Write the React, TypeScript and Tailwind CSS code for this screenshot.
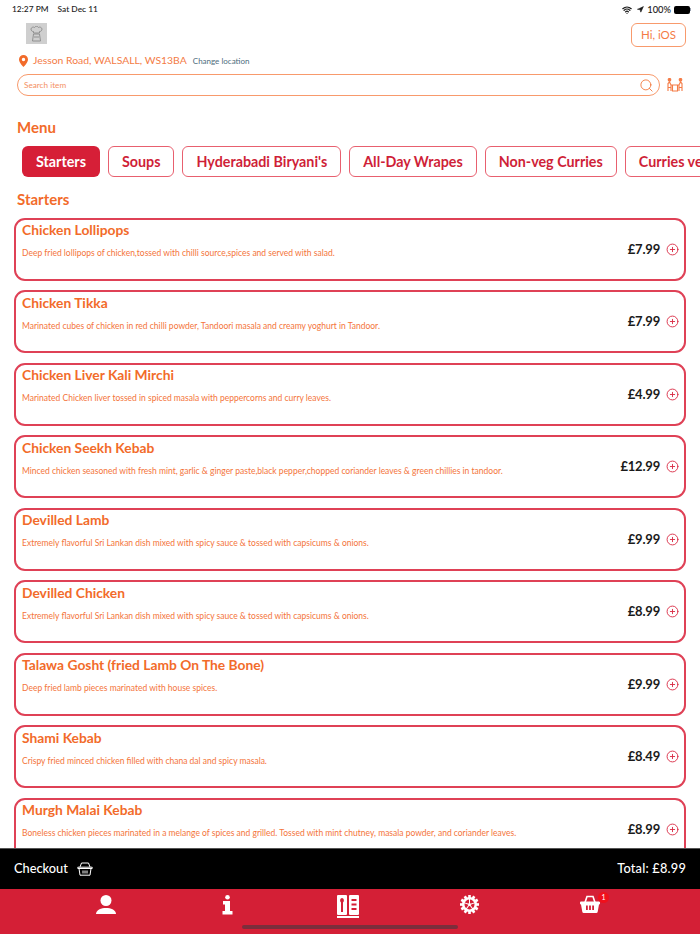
import React from 'react'
import { Search, CirclePlus, Wifi, Navigation } from 'lucide-react'

const font = { fontFamily: 'Lato, "Noto Sans", sans-serif' }

const categories = ['Starters', 'Soups', "Hyderabadi Biryani's", 'All-Day Wrapes', 'Non-veg Curries', 'Curries veg']

const items = [
  { name: 'Chicken Lollipops', desc: 'Deep fried lollipops of chicken,tossed with chilli source,spices and served with salad.', price: '£7.99' },
  { name: 'Chicken Tikka', desc: 'Marinated cubes of chicken in red chilli powder, Tandoori masala and creamy yoghurt in Tandoor.', price: '£7.99' },
  { name: 'Chicken Liver Kali Mirchi', desc: 'Marinated Chicken liver tossed in spiced masala with peppercorns and curry leaves.', price: '£4.99' },
  { name: 'Chicken Seekh Kebab', desc: 'Minced chicken seasoned with fresh mint, garlic & ginger paste,black pepper,chopped coriander leaves & green chillies in tandoor.', price: '£12.99' },
  { name: 'Devilled Lamb', desc: 'Extremely flavorful Sri Lankan dish mixed with spicy sauce & tossed with capsicums & onions.', price: '£9.99' },
  { name: 'Devilled Chicken', desc: 'Extremely flavorful Sri Lankan dish mixed with spicy sauce & tossed with capsicums & onions.', price: '£8.99' },
  { name: 'Talawa Gosht (fried Lamb On The Bone)', desc: 'Deep fried lamb pieces marinated with house spices.', price: '£9.99' },
  { name: 'Shami Kebab', desc: 'Crispy fried minced chicken filled with chana dal and spicy masala.', price: '£8.49' },
  { name: 'Murgh Malai Kebab', desc: 'Boneless chicken pieces marinated in a melange of spices and grilled. Tossed with mint chutney, masala powder, and coriander leaves.', price: '£8.99' },
]

const BasketOutline = () => (
  <svg width="16" height="14" viewBox="0 0 16 14" fill="none" stroke="currentColor" strokeWidth="1">
    <path d="M3 5 4.500 1h7L13 5" />
    <path d="M.8 5.200h14.400v1.300H.8ZM2 6.500l1 6.700h10l1-6.700" />
    <path d="M6 8.500v3M8 8.500v3M10 8.500v3" />
  </svg>
)

const TableIcon = () => (
  <svg width="16" height="14" viewBox="0 0 16 14" fill="none" stroke="#f47b45" strokeWidth="1.100">
    <circle cx="2.500" cy="1.800" r="1.300" fill="#f47b45" />
    <circle cx="13.500" cy="1.800" r="1.300" fill="#f47b45" />
    <path d="M1 13V5.500L2.500 4 4 7h8l1.500-3L15 5.500V13M4 7v6M12 7v6M1 9.500h3M12 9.500h3M5.500 7v6h5V7" />
  </svg>
)

const UserIcon = () => (
  <svg width="20" height="19" viewBox="0 0 20 19" fill="white">
    <circle cx="10" cy="5.500" r="5.500" />
    <path d="M0 18.500C1 14.500 5 13 10 13s9 1.500 10 5.500a.500.500 0 0 1-.500.500H.500a.500.500 0 0 1-.500-.500Z" />
  </svg>
)

const InfoIcon = () => (
  <svg width="11" height="20" viewBox="0 0 11 20" fill="white">
    <circle cx="5.500" cy="2.300" r="2.300" />
    <path d="M1 6h7v10h2.500v3.500H.5V16H3v-6.500H1Z" />
  </svg>
)

const MenuTabIcon = () => (
  <div className="flex flex-col items-center">
    <svg width="22" height="20" viewBox="0 0 22 20" fill="white">
      <path fillRule="evenodd" d="M0 1a1 1 0 0 1 1-1h8a1 1 0 0 1 1 1v18a1 1 0 0 1-1 1H1a1 1 0 0 1-1-1ZM5 3a2 2.500 0 0 0-1 4.600V17h2V7.600A2 2.500 0 0 0 5 3Z" />
      <path fillRule="evenodd" d="M12 1a1 1 0 0 1 1-1h8a1 1 0 0 1 1 1v18a1 1 0 0 1-1 1h-8a1 1 0 0 1-1-1ZM14.500 4v2h5V4Zm0 4.500v2h5v-2Zm0 4.500v2h5v-2Z" />
    </svg>
    <div className="w-[22px] h-[1.500px] bg-white mt-[1px]" />
  </div>
)

const GearIcon = () => {
  const teeth = Array.from({ length: 12 }, (_, i) => i * 30)
  return (
    <svg width="19" height="19" viewBox="0 0 19 19" fill="white">
      {teeth.map((a) => (
        <rect key={a} x="8.200" y="0" width="2.600" height="4" transform={`rotate(${a} 9.500 9.500)`} />
      ))}
      <path fillRule="evenodd" d="M9.500 2a7.500 7.500 0 1 1 0 15 7.500 7.500 0 0 1 0-15ZM9.500 4.500a5 5 0 1 0 0 10 5 5 0 0 0 0-10Z" />
      <circle cx="9.500" cy="9.500" r="1.500" />
      {[0, 72, 144, 216, 288].map((a) => (
        <rect key={a} x="9" y="3.500" width="1" height="5" transform={`rotate(${a} 9.500 9.500)`} />
      ))}
    </svg>
  )
}

const BasketIcon = () => (
  <svg width="20" height="18" viewBox="0 0 20 18" fill="white">
    <path d="M5 7.500 7 1.500h6l2 6" fill="none" stroke="white" strokeWidth="1.600" />
    <path fillRule="evenodd" d="M1 6.500h18a1 1 0 0 1 1 1v1a1 1 0 0 1-1 1l-1.300 7.200a1.500 1.500 0 0 1-1.500 1.300H3.800a1.500 1.500 0 0 1-1.500-1.300L1 9.500a1 1 0 0 1-1-1v-1a1 1 0 0 1 1-1ZM6 10.500v4.500h1.800v-4.500Zm3.100 0v4.500h1.800v-4.500Zm3.100 0v4.500H14v-4.500Z" />
  </svg>
)

const ChefIcon = () => (
  <svg width="13" height="16" viewBox="0 0 13 16" fill="none" stroke="#8a8a8a" strokeWidth="0.900">
    <path d="M3.500 5.500a2.200 2.200 0 1 1 1-4 2.300 2.300 0 0 1 4 0 2.200 2.200 0 1 1 1 4V7h-6ZM2.500 15l1-7h6l1 7ZM4 11h5" />
  </svg>
)

const PinIcon = () => (
  <svg width="9" height="12" viewBox="0 0 9 12" fill="#f26b2a">
    <path fillRule="evenodd" d="M4.500 0A4.500 4.500 0 0 1 9 4.500C9 7.500 4.500 12 4.500 12S0 7.500 0 4.500A4.500 4.500 0 0 1 4.500 0Zm0 2.800a1.700 1.700 0 1 0 0 3.400 1.700 1.700 0 0 0 0-3.400Z" />
  </svg>
)

const App = () => {
  return (
    <div className="relative w-[700px] h-[934px] bg-white flex flex-col overflow-hidden" style={font}>
      {/* status bar */}
      <div className="h-[17px] flex items-center justify-between pl-[12px] pr-[9px] text-[8.400px] font-medium text-[#1a1a1a] shrink-0 mt-px">
        <div className="flex gap-[9px]">
          <span>12:27 PM</span>
          <span>Sat Dec 11</span>
        </div>
        <div className="flex items-center gap-[2px]">
          <Wifi size={10} strokeWidth={3} />
          <Navigation size={7} fill="#1a1a1a" className="ml-[3px]" />
          <span className="ml-[1px] text-[9.300px]">100%</span>
          <div className="flex items-center ml-[1px]">
            <div className="w-[16px] h-[8px] rounded-[2px] bg-black" />
            <div className="w-[1px] h-[3px] bg-gray-400" />
          </div>
        </div>
      </div>

      {/* header */}
      <div className="flex items-start justify-between pl-[26px] pr-[14px] h-[28px] mt-[5px] shrink-0">
        <div className="w-[21px] h-[21px] bg-[#cfcfcf] flex items-center justify-center">
          <ChefIcon />
        </div>
        <div className="w-[55px] h-[24px] rounded-[6px] border border-[#f89a6c] text-[#f47b45] text-[11.500px] flex items-center justify-center">
          Hi, iOS
        </div>
      </div>

      {/* location */}
      <div className="flex items-center pl-[19px] h-[16px] mt-[2px] shrink-0">
        <PinIcon />
        <span className="ml-[5px] text-[10.400px] text-[#f47b45]">Jesson Road, WALSALL, WS13BA</span>
        <span className="ml-[6px] text-[8px] text-[#4d6c7c]">Change location</span>
      </div>

      {/* search */}
      <div className="flex items-center pl-[17px] pr-[17px] mt-[5px] gap-[7px] shrink-0">
        <div className="flex-1 h-[22px] rounded-[11px] border border-[#f89a6c] flex items-center justify-between pl-[6px] pr-[5px]">
          <span className="text-[8.200px] text-[#f4905f]">Search item</span>
          <Search size={15} strokeWidth={1.300} color="#f26b2a" />
        </div>
        <TableIcon />
      </div>

      {/* menu */}
      <div className="pl-[17px] mt-[21px] text-[15px] leading-[20px] font-bold text-[#f26b2a] shrink-0">Menu</div>

      <div className="flex gap-[8px] pl-[22px] mt-[9px] shrink-0 overflow-hidden">
        {categories.map((c, i) => (
          <div
            key={c}
            className={
              i === 0
                ? 'shrink-0 h-[31px] px-[14px] rounded-[6px] bg-[#d61f37] text-white text-[14.300px] font-bold flex items-center'
                : 'shrink-0 h-[31px] px-[13px] rounded-[6px] bg-white border border-[#e8606f] text-[#cf1f38] text-[14.300px] font-bold flex items-center'
            }
          >
            {c}
          </div>
        ))}
      </div>

      <div className="pl-[17px] mt-[12px] text-[15px] leading-[20px] font-bold text-[#f26b2a] shrink-0">Starters</div>

      {/* list */}
      <div className="flex-1 min-h-0 overflow-hidden px-[14px] mt-[8.800px] flex flex-col gap-[9.500px]">
        {items.map((it) => (
          <div key={it.name} className="shrink-0 h-[63px] rounded-[11px] border-2 border-[#df4156] flex items-center justify-between pl-[6px] pr-[5px]">
            <div className="flex flex-col self-start">
              <div className="text-[13.800px] leading-[18px] mt-[1.500px] font-bold text-[#f26b2a]">{it.name}</div>
              <div className="text-[8.500px] leading-[12px] mt-[8px] text-[#f4743a]">{it.desc}</div>
            </div>
            <div className="flex items-center gap-[6px] shrink-0">
              <span className="text-[13px] font-bold text-[#1a1a1a] tracking-[-0.2px]">{it.price}</span>
              <CirclePlus size={13} strokeWidth={1.700} color="#d92c45" />
            </div>
          </div>
        ))}
      </div>

      {/* checkout */}
      <div className="h-[41px] shrink-0 bg-black border-t border-[#555] flex items-center justify-between px-[14px] text-white text-[12.800px] font-medium tracking-[0.2px]">
        <div className="flex items-center gap-[9px]">
          <span className="tracking-normal">Checkout</span>
          <BasketOutline />
        </div>
        <span>Total: £8.99</span>
      </div>

      {/* tab bar */}
      <div className="relative h-[45px] shrink-0 bg-[#d41f36] grid grid-cols-5 items-start pl-[45.500px] pr-[49.500px] pt-[6px] text-white">
        <div className="flex justify-center"><UserIcon /></div>
        <div className="flex justify-center"><InfoIcon /></div>
        <div className="flex justify-center"><MenuTabIcon /></div>
        <div className="flex justify-center"><GearIcon /></div>
        <div className="flex justify-center relative">
          <BasketIcon />
          <div className="absolute top-[-3px] left-[68.500px] w-[11px] h-[11px] rounded-full bg-[#f0101c] text-[7px] flex items-center justify-center">1</div>
        </div>
        <div className="absolute left-[242px] top-[36px] w-[216px] h-[4px] rounded-full bg-[#7c2e3c]" />
      </div>
    </div>
  )
}

export default App
